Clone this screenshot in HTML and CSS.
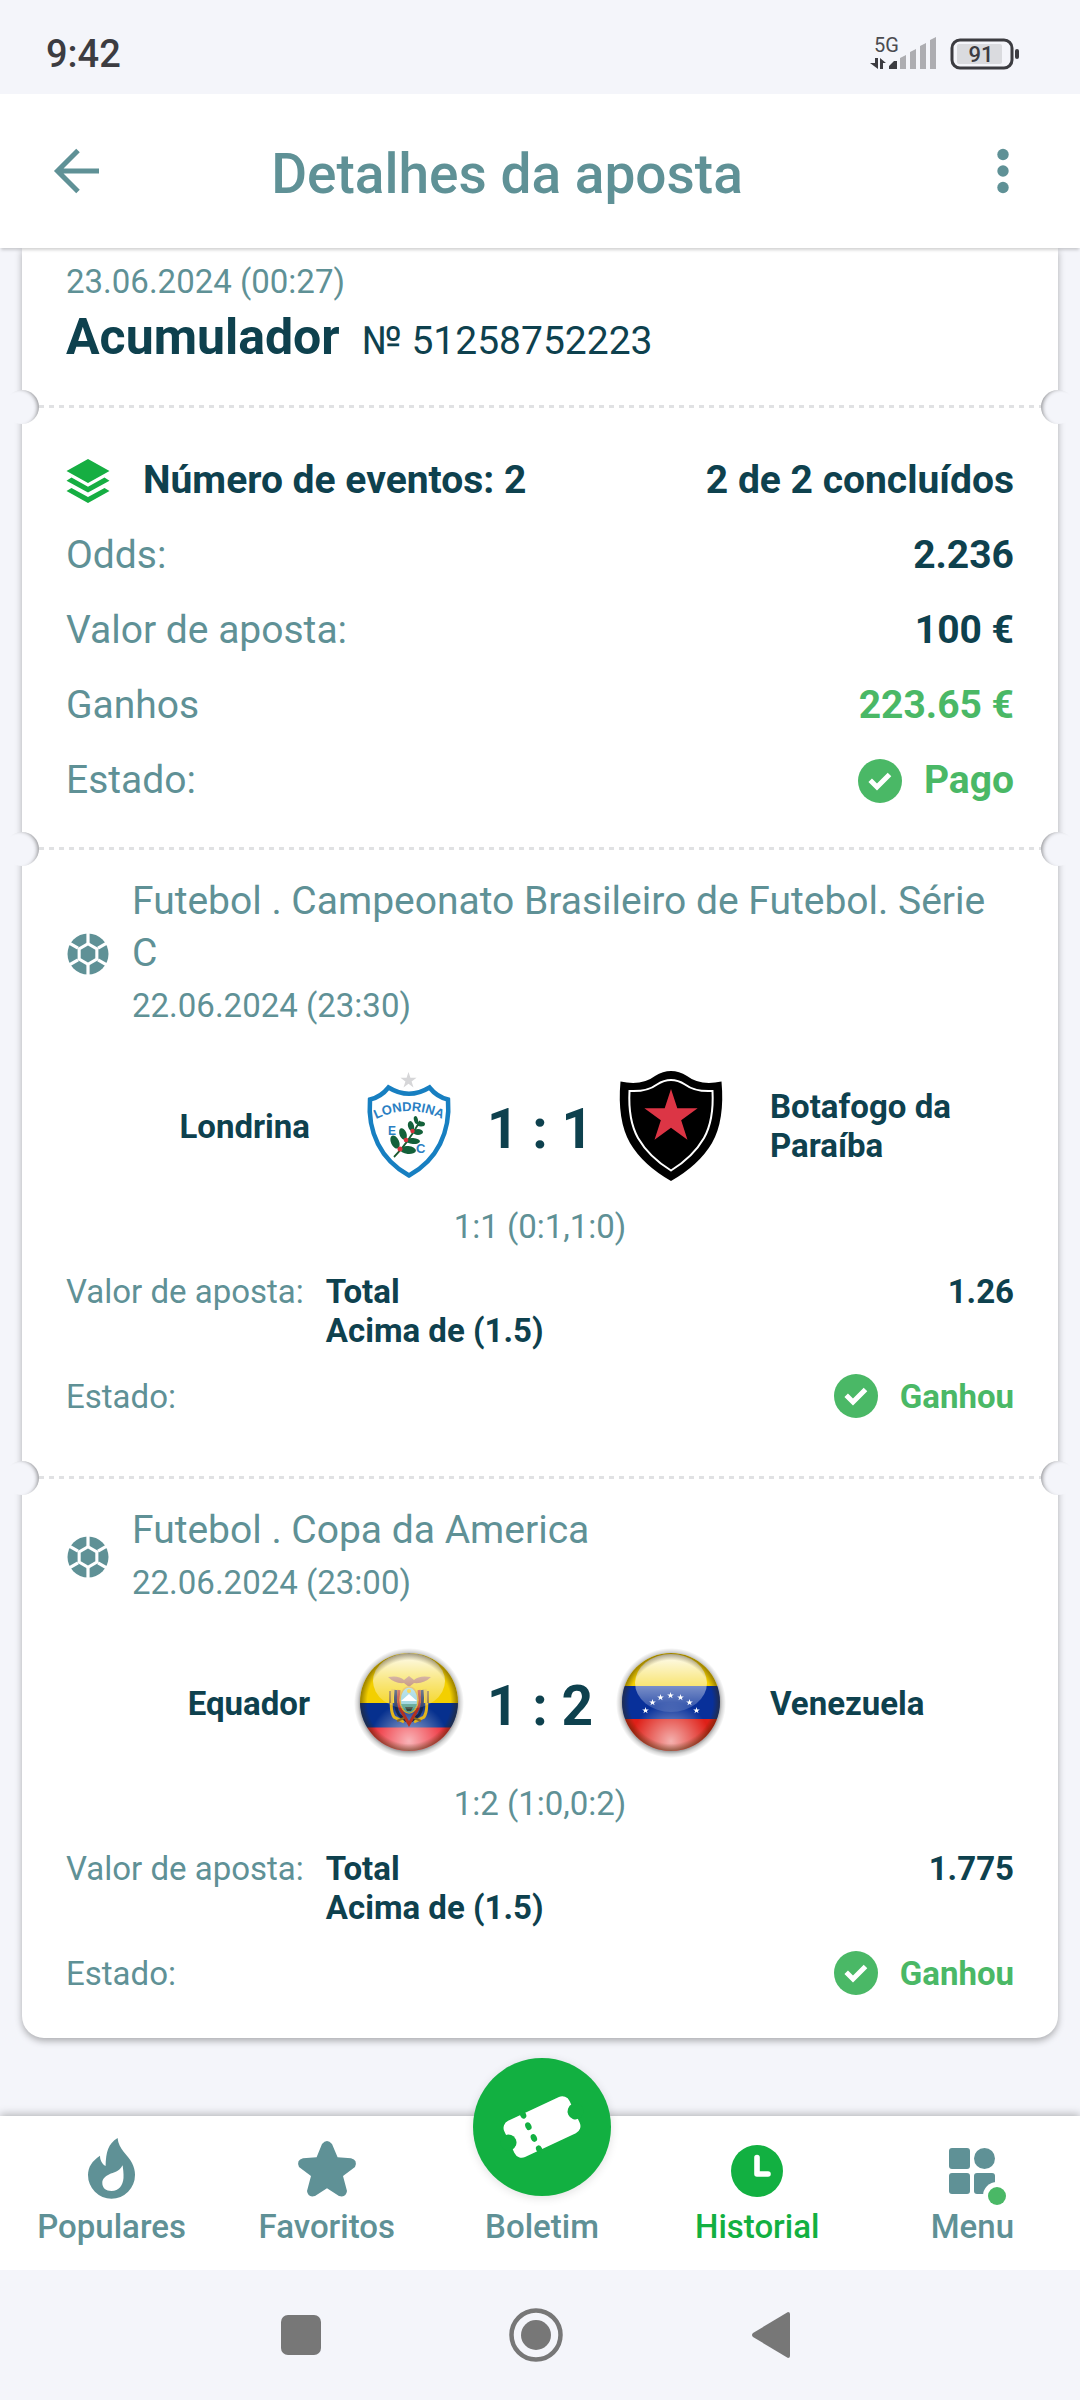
FILE: index.html
```html
<!DOCTYPE html>
<html lang="pt">
<head>
<meta charset="utf-8">
<meta name="viewport" content="width=device-width, initial-scale=1">
<title>Detalhes da aposta</title>
<link rel="stylesheet" href="styles.css">
</head>
<body>
<svg class="defs" aria-hidden="true">
  <defs>
    <symbol id="check" viewBox="0 0 44 44">
      <circle cx="22" cy="22" r="22" fill="#4ab866"/>
      <path d="M12.2 21.2l6.8 6.8 12.5-12.5" fill="none" stroke="#fff" stroke-width="5"/>
    </symbol>
    <symbol id="ball" viewBox="0 0 44 44">
      <circle cx="22" cy="22" r="20.5" fill="#5f9196"/>
      <path d="M22 10l10.4 6v12L22 34l-10.4-6V16z" fill="#fff"/>
      <path d="M22 11V0M32 16.2l10-5.8M32 27.8l10 5.8M22 33v11M12 27.8l-10 5.8M12 16.2l-10-5.8" stroke="#fff" stroke-width="3.2"/>
      <path d="M22 13.600l7.300 4.200v8.400l-7.300 4.200-7.300-4.200v-8.400z" fill="#5f9196"/>
    </symbol>
    <symbol id="star5" viewBox="-10 -10 20 20">
      <path d="M0-10l2.250 6.910h7.260L3.630 1.180l2.250 6.910L0 3.820l-5.880 4.270 2.250-6.910-5.880-4.270h7.260z"/>
    </symbol>
    <linearGradient id="gloss" x1="0" y1="0" x2="0" y2="1">
      <stop offset="0" stop-color="#fff" stop-opacity="0.95"/>
      <stop offset="0.5" stop-color="#fff" stop-opacity="0.5"/>
      <stop offset="1" stop-color="#fff" stop-opacity="0.12"/>
    </linearGradient>
    <radialGradient id="glow" cx="0.5" cy="0.9" r="0.4">
      <stop offset="0" stop-color="#fff" stop-opacity="0.65"/>
      <stop offset="1" stop-color="#fff" stop-opacity="0"/>
    </radialGradient>
    <radialGradient id="halo">
      <stop offset="0.85" stop-color="#000" stop-opacity="0.5"/>
      <stop offset="0.93" stop-color="#000" stop-opacity="0.16"/>
      <stop offset="1" stop-color="#000" stop-opacity="0"/>
    </radialGradient>
    <radialGradient id="rim">
      <stop offset="0.85" stop-color="#3a2a00" stop-opacity="0"/>
      <stop offset="1" stop-color="#3a2a00" stop-opacity="0.5"/>
    </radialGradient>
    <clipPath id="disc"><circle cx="55" cy="54" r="49"/></clipPath>
  </defs>
</svg>

<div class="app">
  <div class="status">
    <span class="clock">9:42</span>
    <svg class="signal" width="68" height="34" viewBox="0 0 68 34" role="img" aria-label="Sinal 5G">
      <text x="4" y="15" font-size="20" fill="#4b4b50">5G</text>
      <g fill="#3c3c41">
        <path d="M5 21h3v11L0 26h5zM10 21l6 5h-3v6h-3zM19 32v-3l5-5h3v8z"/>
      </g>
      <g fill="#adadb1">
        <path d="M30 21l6-3v14h-6zM40 15l6-3v20h-6zM50 9l6-3v26h-6zM60 3l6-3v32h-6z"/>
      </g>
    </svg>
    <svg class="battery" width="70" height="32" viewBox="0 0 70 32" role="img" aria-label="Bateria 91">
      <rect x="2" y="2" width="60" height="28" rx="8" fill="none" stroke="#3c3c41" stroke-width="3"/>
      <rect x="7" y="6" width="45" height="20" rx="2" fill="#dadbdf"/>
      <rect x="65" y="11" width="4" height="10" rx="2" fill="#3c3c41"/>
      <text x="31" y="24" font-size="22" font-weight="500" text-anchor="middle" fill="#3c3c41">91</text>
    </svg>
  </div>

  <header class="topbar">
    <button class="icon-btn" type="button" aria-label="Voltar">
      <svg width="46" height="46" viewBox="0 0 46 46" fill="none" stroke="#5f9196" stroke-width="5"><path d="M45 23H5M24 2.500L3.500 23 24 43.500"/></svg>
    </button>
    <h1>Detalhes da aposta</h1>
    <button class="icon-btn" type="button" aria-label="Mais opções">
      <svg width="12" height="46" viewBox="0 0 12 46" fill="#5f9196"><circle cx="6" cy="6.500" r="5.700"/><circle cx="6" cy="23" r="5.700"/><circle cx="6" cy="39.500" r="5.700"/></svg>
    </button>
  </header>

  <main>
    <article class="ticket">
      <section class="intro">
        <time class="muted small">23.06.2024 (00:27)</time>
        <div class="kind"><h2>Acumulador</h2><span>№ 51258752223</span></div>
      </section>

      <div class="tear"></div>

      <section class="summary">
        <div class="row strong">
          <svg width="44" height="44" viewBox="0 0 44 44" fill="#16ae42" aria-hidden="true"><path d="M22 0l21.500 12L22 24 .5 12zM5.500 18.500L22 27.700l16.500-9.200 5 3.200L22 33.500.5 21.700zM5.500 28.900L22 38l16.500-9.100 5 3.200L22 44 .5 32.100z"/></svg>
          <span class="grow">Número de eventos: 2</span><span>2 de 2 concluídos</span>
        </div>
        <dl>
          <div class="row"><dt>Odds:</dt><dd>2.236</dd></div>
          <div class="row"><dt>Valor de aposta:</dt><dd>100 €</dd></div>
          <div class="row"><dt>Ganhos</dt><dd class="won">223.65 €</dd></div>
          <div class="row"><dt>Estado:</dt><dd class="won state"><svg width="44" height="44" aria-hidden="true"><use href="#check"/></svg>Pago</dd></div>
        </dl>
      </section>

      <div class="tear"></div>

      <section class="event">
        <div class="event-head">
          <svg width="44" height="44" aria-hidden="true"><use href="#ball"/></svg>
          <div><h3>Futebol . Campeonato Brasileiro de Futebol. Série C</h3><time class="muted small">22.06.2024 (23:30)</time></div>
        </div>
        <div class="match">
          <span class="team home">Londrina</span>
          <svg width="110" height="110" viewBox="0 0 110 110" role="img" aria-label="Londrina EC">
            <use href="#star5" x="46" y="1" width="17" height="17" fill="#d6d6d8"/>
            <path d="M34.500 16.500Q55 29 75.500 16.500Q83 26 94 28.500Q96 53 86 73Q76 93 55 104.500Q34 93 24 73Q14 53 16 28.500Q27 26 34.500 16.500z" fill="#fff" stroke="#177fc1" stroke-width="4.500"/>
            <path id="arc" d="M22 48Q55 32 88 48" fill="none"/>
            <text class="crest" font-size="13"><textPath href="#arc" startOffset="50%" text-anchor="middle">LONDRINA</textPath></text>
            <text class="crest" x="34" y="64" font-size="12">E</text>
            <text class="crest" x="62" y="82" font-size="13">C</text>
            <path d="M40 86Q54 72 66 50" fill="none" stroke="#1b5b30" stroke-width="1.800"/>
            <g fill="#14613a">
              <ellipse cx="41" cy="71" rx="4" ry="7" transform="rotate(-25 41 71)"/>
              <ellipse cx="54" cy="79" rx="8" ry="4" transform="rotate(5 54 79)"/>
              <ellipse cx="49" cy="63" rx="3.500" ry="6" transform="rotate(-20 49 63)"/>
              <ellipse cx="59" cy="70" rx="7" ry="3" transform="rotate(5 59 70)"/>
              <ellipse cx="57" cy="55" rx="3" ry="5" transform="rotate(-15 57 55)"/>
              <ellipse cx="64" cy="61" rx="5" ry="3"/>
              <ellipse cx="62" cy="49" rx="2" ry="4" transform="rotate(-15 62 49)"/>
              <ellipse cx="67" cy="53" rx="4" ry="2.500"/>
            </g>
            <g fill="#d8323c"><circle cx="46" cy="78" r="2.500"/><circle cx="52" cy="69" r="2.300"/><circle cx="58.500" cy="60" r="2.200"/></g>
          </svg>
          <strong class="score">1 : 1</strong>
          <svg width="110" height="110" viewBox="0 0 110 110" role="img" aria-label="Botafogo da Paraíba">
            <path d="M4.500 10.500Q26 15 39 5Q47 0 55 0T71 5Q84 15 105.500 10.500Q109 49 96 72Q83 94 55 110Q27 94 14 72Q1 49 4.500 10.500z"/>
            <path d="M13.500 20Q31 21 41 13.500Q48 9 55 9T69 13.500Q79 21 96.500 20Q98 49 88 67Q77 86 55 99.500Q33 86 22 67Q12 49 13.500 20z" fill="none" stroke="#fff" stroke-width="2"/>
            <use href="#star5" x="27" y="18" width="56" height="56" fill="#dc3545"/>
          </svg>
          <span class="team">Botafogo da Paraíba</span>
        </div>
        <p class="periods">1:1 (0:1,1:0)</p>
        <dl class="bet">
          <div class="pick"><dt>Valor de aposta:</dt><dd class="grow">Total<br>Acima de (1.5)</dd><dd>1.26</dd></div>
          <div class="result"><dt>Estado:</dt><dd class="won state"><svg width="44" height="44" aria-hidden="true"><use href="#check"/></svg>Ganhou</dd></div>
        </dl>
      </section>

      <div class="tear"></div>

      <section class="event">
        <div class="event-head">
          <svg width="44" height="44" aria-hidden="true"><use href="#ball"/></svg>
          <div><h3>Futebol . Copa da America</h3><time class="muted small">22.06.2024 (23:00)</time></div>
        </div>
        <div class="match">
          <span class="team home">Equador</span>
          <svg width="110" height="110" viewBox="0 0 110 110" role="img" aria-label="Equador">
            <circle cx="55" cy="55" r="55" fill="url(#halo)"/>
            <g clip-path="url(#disc)">
              <path d="M0 0h110v55H0z" fill="#f3cf00"/><path d="M0 55h110v25H0z" fill="#06308e"/><path d="M0 79.500h110V110H0z" fill="#ee2a35"/>
              <circle cx="55" cy="54" r="49" fill="url(#glow)"/>
              <path d="M34 29Q45 27 50 32L55 28l5 4q5-5 17-3-7 7-17 6l-5 4-5-4q-9 1-16-6z" fill="#a0522d"/>
              <g fill="none" stroke-width="3">
                <path d="M39 41q-4 20 1 28l10 5M71 41q4 20-1 28l-10 5" stroke="#e3b51c"/>
                <path d="M42 42q-2 18 3 25l8 6M68 42q2 18-3 25l-8 6" stroke="#17284f"/>
                <path d="M45 42q-2 16 3 22l7 12 7-12q5-6 3-22" stroke="#b5301f"/>
                <path d="M36 43v12M74 43v12M43 73l7-3M67 73l-7-3" stroke="#8a6a22" stroke-width="2"/>
              </g>
              <ellipse cx="55" cy="52" rx="9" ry="13" fill="#8fd0dc" stroke="#d9a520" stroke-width="1.500"/>
              <path d="M47 53l8-7 8 7z" fill="#fff"/><path d="M47 56h16q-2 7-8 9-6-2-8-9z" fill="#4f9e8b"/><path d="M51 59h8l-2 4h-4z" fill="#38473e"/>
              <circle cx="55" cy="43" r="2" fill="#f2c500"/>
              <ellipse cx="55" cy="33" rx="36" ry="28" fill="url(#gloss)"/>
              <circle cx="55" cy="54" r="49" fill="url(#rim)"/>
            </g>
          </svg>
          <strong class="score">1 : 2</strong>
          <svg width="110" height="110" viewBox="0 0 110 110" role="img" aria-label="Venezuela">
            <circle cx="55" cy="55" r="55" fill="url(#halo)"/>
            <g clip-path="url(#disc)">
              <path d="M0 0h110v38H0z" fill="#f3cf00"/><path d="M0 38h110v33H0z" fill="#08309a"/><path d="M0 71h110v39H0z" fill="#df2018"/>
              <circle cx="55" cy="54" r="49" fill="url(#glow)"/>
              <ellipse cx="55" cy="35" rx="36" ry="29" fill="url(#gloss)"/>
              <g fill="#fff">
                <use href="#star5" x="26" y="59" width="7" height="7"/><use href="#star5" x="33" y="51" width="7" height="7"/><use href="#star5" x="41" y="46" width="7" height="7"/><use href="#star5" x="51" y="44" width="7" height="7"/><use href="#star5" x="61" y="46" width="7" height="7"/><use href="#star5" x="70" y="51" width="7" height="7"/><use href="#star5" x="77" y="59" width="7" height="7"/>
              </g>
              <circle cx="55" cy="54" r="49" fill="url(#rim)"/>
            </g>
          </svg>
          <span class="team">Venezuela</span>
        </div>
        <p class="periods">1:2 (1:0,0:2)</p>
        <dl class="bet">
          <div class="pick"><dt>Valor de aposta:</dt><dd class="grow">Total<br>Acima de (1.5)</dd><dd>1.775</dd></div>
          <div class="result"><dt>Estado:</dt><dd class="won state"><svg width="44" height="44" aria-hidden="true"><use href="#check"/></svg>Ganhou</dd></div>
        </dl>
      </section>
    </article>
  </main>

  <nav class="tabs">
    <a href="#populares">
      <svg width="48" height="62" viewBox="0 0 48 62" fill="#5f9196" fill-rule="evenodd" aria-hidden="true"><path d="M29.600 0C30.500 11 40 17 44 25C46 29 47 33 47 37A23.500 23.700 0 1 1 0 37C0 29 4 23 12 17.700C12 22 14 26 17.600 28C18 14 20 6 29.600 0ZM34.600 27.300C31 34 26 34 21 36.500C17 38.500 14.300 41 14.300 45C14.300 50 18 53 23.500 53C31 53 35 47 35.500 40C35.800 35 35 31 34.600 27.300Z"/></svg>
      <span>Populares</span>
    </a>
    <a href="#favoritos">
      <svg width="58" height="62" viewBox="0 -3 58 62" fill="#5f9196" aria-hidden="true"><path d="M18.600 16.300L24 3Q29-3 34 3L39.600 16.300L53 17.300Q60 19 57 26L45 35L49 50Q48 57 41 55L29 47.300L17 55Q10 57 9 50L13 35L1 26Q-2 19 5 17.300Z"/></svg>
      <span>Favoritos</span>
    </a>
    <a href="#boletim" class="slip">
      <i class="fab">
        <svg width="138" height="138" viewBox="-69 -69 138 138" aria-hidden="true">
          <g transform="rotate(-25)">
            <rect x="-36" y="-20" width="72" height="40" rx="8" fill="#fff"/>
            <g fill="#12b041"><circle cx="-37" r="8"/><circle cx="37" r="8"/><ellipse cx="-12" cy="-19" rx="3" ry="4"/><ellipse cx="-12" cy="-6.500" rx="3" ry="4"/><ellipse cx="-12" cy="6.500" rx="3" ry="4"/><ellipse cx="-12" cy="19" rx="3" ry="4"/></g>
          </g>
        </svg>
      </i>
      <span>Boletim</span>
    </a>
    <a href="#historial" class="current" aria-current="page">
      <svg width="52" height="62" viewBox="0 -7 52 62" aria-hidden="true"><circle cx="26" cy="26" r="26" fill="#12b041"/><path d="M26 12.500v16.500h11" fill="none" stroke="#fff" stroke-width="5.600" stroke-linecap="round" stroke-linejoin="round"/></svg>
      <span>Historial</span>
    </a>
    <a href="#menu">
      <svg width="64" height="62" viewBox="-9 -10 64 62" fill="#5f9196" aria-hidden="true"><rect width="21" height="21" rx="3"/><circle cx="35.500" cy="10.500" r="10.500"/><rect y="25" width="21" height="21" rx="3"/><rect x="25" y="25" width="21" height="21" rx="3"/><circle cx="48" cy="48" r="14" fill="#fff"/><circle cx="48" cy="48" r="9" fill="#4ab866"/></svg>
      <span>Menu</span>
    </a>
  </nav>

  <div class="system">
    <button type="button" aria-label="Recentes"><svg width="40" height="40"><rect width="40" height="40" rx="7" fill="#777"/></svg></button>
    <button type="button" aria-label="Início"><svg width="54" height="54" viewBox="0 0 54 54"><circle cx="27" cy="27" r="24.500" fill="none" stroke="#777" stroke-width="4.500"/><circle cx="27" cy="27" r="15" fill="#777"/></svg></button>
    <button type="button" aria-label="Voltar"><svg width="40" height="46" viewBox="0 0 40 46"><path d="M37 0Q39 0 39 2V44Q39 46 37 46L2 25Q0 23 2 21Z" fill="#777"/></svg></button>
  </div>
</div>
</body>
</html>
```

FILE: styles.css
```css
:root {
  --bg: #f4f5fa;
  --teal: #5f9196;
  --ink: #0e414e;
  --green: #12b041;
  --won: #4ab866;
}

* { box-sizing: border-box; }

body {
  margin: 0;
  background: var(--bg);
  color: var(--ink);
  font: 400 33px/39px Roboto, sans-serif;
}

h1, h2, h3, p, dl, dd { margin: 0; }
svg { display: block; flex: none; overflow: visible; }
button { padding: 0; border: 0; background: none; font: inherit; }
.defs { position: absolute; width: 0; height: 0; }

.app {
  display: flex;
  flex-direction: column;
  min-height: 100vh;
}

/* Status bar */
.status {
  display: flex;
  align-items: center;
  height: 94px;
  padding: 14px 60px 0 46px;
  color: #3c3c41;
}
.clock { flex: 1; font-size: 38px; font-weight: 500; }
.signal { margin-right: 12px; }

/* App bar */
.topbar {
  position: relative;
  display: flex;
  align-items: center;
  height: 154px;
  padding: 0 44px;
  background: #fff;
  box-shadow: 0 3px 3px -1px rgba(0, 0, 0, 0.18);
}
.topbar h1 {
  flex: 1;
  padding: 5px 66px 0 0;
  color: var(--teal);
  font-size: 55px;
  font-weight: 500;
  line-height: 66px;
  text-align: center;
}
.icon-btn {
  display: flex;
  align-items: center;
  justify-content: center;
  width: 66px;
  height: 66px;
}

/* Ticket */
main { flex: 1; padding: 0 22px 77px; }
.ticket {
  background: #fff;
  border-radius: 0 0 22px 22px;
  box-shadow: 0 3px 7px rgba(0, 0, 0, 0.3);
}
.ticket section { padding: 0 44px; }
.muted { color: var(--teal); }
.small { display: block; line-height: 54px; }
.grow { flex: 1; }
.won { color: var(--won); }
.state { display: flex; align-items: center; gap: 22px; }

.ticket .intro { padding-top: 7px; padding-bottom: 20px; }
.kind { display: flex; align-items: baseline; gap: 22px; font-size: 39px; line-height: 57px; }
.kind h2 { font-size: 50px; font-weight: 700; }

/* Perforated divider with a notch at each edge */
.tear {
  position: relative;
  height: 34px;
  background: repeating-linear-gradient(90deg, #e0e1e3 0 5px, transparent 5px 10px) 17px 15px / calc(100% - 34px) 3px no-repeat;
}
.tear::before, .tear::after {
  content: "";
  position: absolute;
  top: 0;
  width: 34px;
  height: 34px;
  border-radius: 50%;
  background: var(--bg);
}
.tear::before { left: -17px; box-shadow: inset -4px 1px 4px -3px rgba(0, 0, 0, 0.45); }
.tear::after { right: -17px; box-shadow: inset 4px 1px 4px -3px rgba(0, 0, 0, 0.45); }

.ticket .summary { padding-top: 19px; padding-bottom: 14px; }
.row {
  display: flex;
  align-items: center;
  justify-content: space-between;
  height: 75px;
  font-size: 39px;
}
.row svg + .grow { padding-left: 33px; }
.row dt { color: var(--teal); }
.strong, .row dd { font-weight: 700; }

/* Events */
.ticket .event { padding-top: 9px; padding-bottom: 43px; }
.event-head { display: flex; align-items: center; gap: 22px; }
.event-head h3 {
  color: var(--teal);
  font-size: 39px;
  font-weight: 400;
  line-height: 52px;
}
.match {
  display: grid;
  grid-template-columns: 1fr 110px 152px 110px 1fr;
  align-items: center;
  margin-top: 38px;
}
.team { padding-left: 44px; font-weight: 700; }
.home { padding: 0 44px 0 0; text-align: right; }
.score {
  padding-top: 5px;
  font-size: 55px;
  font-weight: 700;
  line-height: 66px;
  text-align: center;
}
.periods {
  margin-top: 19px;
  color: var(--teal);
  line-height: 54px;
  text-align: center;
}
.bet { margin-top: 18px; }
.bet dt { color: var(--teal); }
.bet dd { font-weight: 700; }
.pick { display: flex; gap: 22px; }
.result {
  display: flex;
  align-items: center;
  justify-content: space-between;
  height: 44px;
  margin-top: 24px;
}
.crest { fill: #2b7fc3; font-family: "Liberation Sans", sans-serif; font-weight: 700; }

/* Bottom tabs */
.tabs {
  position: relative;
  display: grid;
  grid-template-columns: repeat(5, 1fr);
  padding: 22px 0 16px 4px;
  background: #fff;
  box-shadow: 0 -2px 8px rgba(0, 0, 0, 0.25);
}
.tabs a {
  position: relative;
  display: flex;
  flex-direction: column;
  align-items: center;
  justify-content: flex-end;
  color: var(--teal);
  font-weight: 500;
  line-height: 54px;
  text-decoration: none;
}
.tabs .current { color: var(--green); }
.fab {
  position: absolute;
  top: -80px;
  left: 50%;
  margin-left: -69px;
  border-radius: 50%;
  background: var(--green);
  box-shadow: 0 2px 10px rgba(0, 0, 0, 0.12);
}

/* System navigation */
.system {
  position: relative;
  display: flex;
  align-items: center;
  justify-content: center;
  gap: 188px;
  height: 130px;
  padding-right: 8px;
  background: var(--bg);
}
```
